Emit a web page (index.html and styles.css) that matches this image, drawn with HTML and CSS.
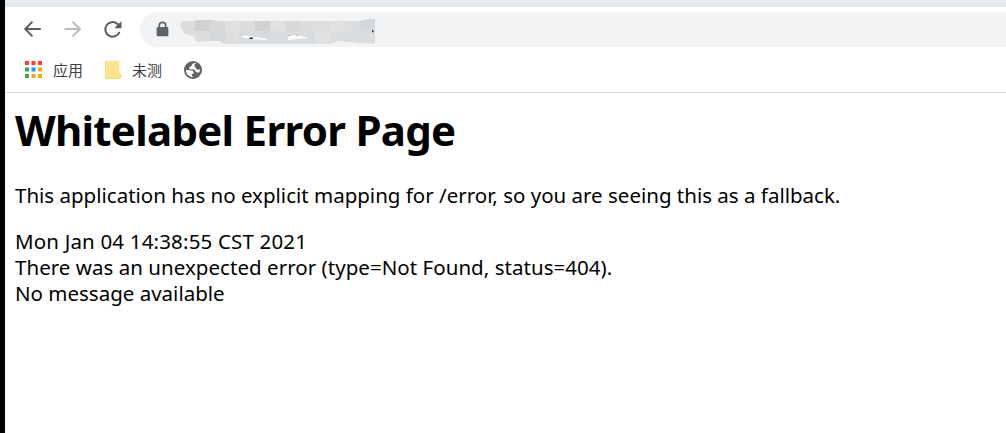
FILE: index.html
```html
<!DOCTYPE html>
<html lang="zh-CN">
	<head>
		<meta charset="utf-8">
		<title>Whitelabel Error Page</title>
		<link rel="stylesheet" href="styles.css">
	</head>
	<body>
		<div class="tab-strip"></div>
		<div class="toolbar">
			<svg class="nav-icon" viewBox="0 0 20 20"><path d="M18.800 9H3.400M10.500 1.600L3.200 9l7.300 7.400"/></svg>
			<svg class="nav-icon disabled" viewBox="0 0 20 20"><path d="M2.500 9h15.400M10.500 1.600L18 9l-7.500 7.400"/></svg>
			<svg class="nav-icon" viewBox="0 0 20 20"><path d="M17.500 11.800A7.300 7.300 0 1 1 15.500 4l1.500 1.500"/><path class="solid" d="M19.500 1v7.200h-7.200z"/></svg>
			<div class="address">
				<svg class="lock" viewBox="0 0 12 16"><path d="M3 6.200V4.200a3 3 0 0 1 6 0v2"/><rect x=".5" y="5.600" width="11" height="8.800" rx="1"/></svg>
				<svg class="smudge" viewBox="0 0 200 35">
					<clipPath id="smear"><path d="M3 9h12l2-1h14l5 1h145l9-2h5v25l-22-2-14-1-10 3H45l-6-3H29l-12 1-4-6-8-2-4-6q-2-6 2-8z"/></clipPath>
					<g clip-path="url(#smear)">
						<path fill="#dcddde" d="M0 0h200v35H0z"/>
						<path fill="#d0d1d2" d="M15 0h15v19H15zM75 9h15v10H75z"/>
						<path fill="#d4d8da" d="M30 19h15v16H30zM180 0h15v19h-15z"/>
						<path fill="#e0e1e2" d="M45 9h15v10H45zM90 9h15v10H90zM135 19h15v16h-15zM150 9h15v10h-15z"/>
						<path fill="#d6d8d9" d="M30 0h15v19H30zM105 9h15v10h-15z"/>
						<path fill="#d9dcde" d="M60 19h45v16H60zM105 19h30v16h-30zM165 19h15v16h-15z"/>
					</g>
					<path fill="#fafbfb" d="M55 23l15 1 18 3-3 1-15-1zM108 23l12 .5 9 2.500-12 1-9 1.500z"/>
					<path fill="#29325c" d="M70 25.500h3v1.500h-4zM192 18.200h1.500v2H192z"/>
					<path fill="#b5a0a4" d="M59 23h3v.8h-3zM108 23h3v.8h-3zM116 23h2v.8h-2z"/>
				</svg>
			</div>
		</div>
		<div class="bookmarks">
			<div class="bookmark">
				<svg class="apps" viewBox="0 0 17 17">
					<path fill="#f44336" d="M0 0h4v4H0zM6.500 0h4v4h-4zM13 0h4v4h-4z"/>
					<path fill="#34a853" d="M0 6.500h4v4H0zM0 13h4v4H0z"/>
					<path fill="#2196f3" d="M6.500 6.500h4v4h-4z"/>
					<path fill="#fba90a" d="M13 6.500h4v4h-4zM6.500 13h4v4h-4zM13 13h4v4h-4z"/>
				</svg>
				<span>应用</span>
			</div>
			<div class="bookmark">
				<svg class="folder" viewBox="0 0 16 18"><path fill="#ffe38f" d="M1 0h12.500q1 0 1 1v11.500l1.300 1v3.500q0 1-1 1H1q-1 0-1-1V1q0-1 1-1z"/><path fill="none" stroke="#f8da75" d="M.5 1v15.500q0 1 1 1h13.200q.8 0 .8-1v-3l-1.200-.8q-1.800.8-1.800 2.300v2.500"/></svg>
				<span>未测</span>
			</div>
			<svg class="globe" viewBox="0 0 18 18">
				<circle cx="9" cy="9" r="9"/>
				<path d="M10.500 2Q7.300 3 7.300 5.600 5 5.800 5 7.600q.2 1 1.600 1h3.100q2 .3 2 2.300 1.600.6 3.500.5A7 7 0 0 0 16 8.200q-1.200.6-2.300.4-2-.3-2-2.100-1.600-.6-1.300-2.200Q10.700 3 12.500 2.800zM1.900 8.900A7.100 7.100 0 0 0 9.500 16.100q-2-.6-1.800-2.800 2.300-.2 2-2-.3-1.600-2.500-1.700-1.500-.6-2.800-.7z"/>
			</svg>
		</div>
		<div class="page">
			<h1>Whitelabel Error Page</h1>
			<p>This application has no explicit mapping for /error, so you are seeing this as a fallback.</p>
			<div class="created">Mon Jan 04 14:38:55 CST 2021</div>
			<div class="detail">There was an unexpected error (type=Not Found, status=404).</div>
			<div class="message">No message available</div>
		</div>
	</body>
</html>
```

FILE: styles.css
```css
body {
	margin: 0;
	box-sizing: border-box;
	height: 433px;
	overflow: hidden;
	border-left: 5px solid #000;
	background-color: #fff;
	color: #000;
	font: 20.5px/26px 'Noto Sans', 'Noto Sans CJK SC', sans-serif;
}
svg {
	display: block;
	flex: none;
}
.tab-strip {
	height: 7px;
	background-color: #e5e9ec;
}
.toolbar {
	display: flex;
	align-items: center;
	gap: 20px;
	height: 35px;
	padding: 5px 0 0 17px;
}
.nav-icon {
	width: 20px;
	height: 20px;
	fill: none;
	stroke: #5a5d61;
	stroke-width: 2;
}
.nav-icon.disabled {
	stroke: #b9bbbd;
}
.nav-icon .solid {
	fill: #5a5d61;
	stroke: none;
}
.address {
	display: flex;
	flex: 1;
	align-items: center;
	gap: 11px;
	height: 35px;
	margin-left: -2px;
	padding-left: 16px;
	border-radius: 18px 0 0 18px;
	background-color: #f1f3f4;
}
.lock {
	width: 13px;
	height: 17px;
	fill: #5f6368;
}
.lock path {
	fill: none;
	stroke: #5f6368;
	stroke-width: 1.6;
}
.smudge {
	width: 200px;
	height: 35px;
}
.bookmarks {
	display: flex;
	align-items: center;
	gap: 22px;
	height: 45px;
	padding-left: 20px;
	border-bottom: 1px solid #dadcdd;
	color: #3c4043;
	font: 15px/20px 'Noto Sans CJK SC', sans-serif;
}
.bookmark {
	display: flex;
	align-items: center;
	gap: 11px;
}
.apps {
	width: 17px;
	height: 17px;
}
.folder {
	width: 16px;
	height: 18px;
}
.globe {
	width: 18px;
	height: 18px;
	fill: #5f6368;
}
.globe path {
	fill: #fff;
}
.page {
	padding: 9px 10px;
}
h1 {
	margin: 0;
	font-size: 42px;
	line-height: 56px;
	font-weight: 700;
	letter-spacing: -.72px;
}
p {
	margin: 24px 0 20px;
}
.created {
	letter-spacing: .17px;
}
.detail {
	letter-spacing: .04px;
}
```
